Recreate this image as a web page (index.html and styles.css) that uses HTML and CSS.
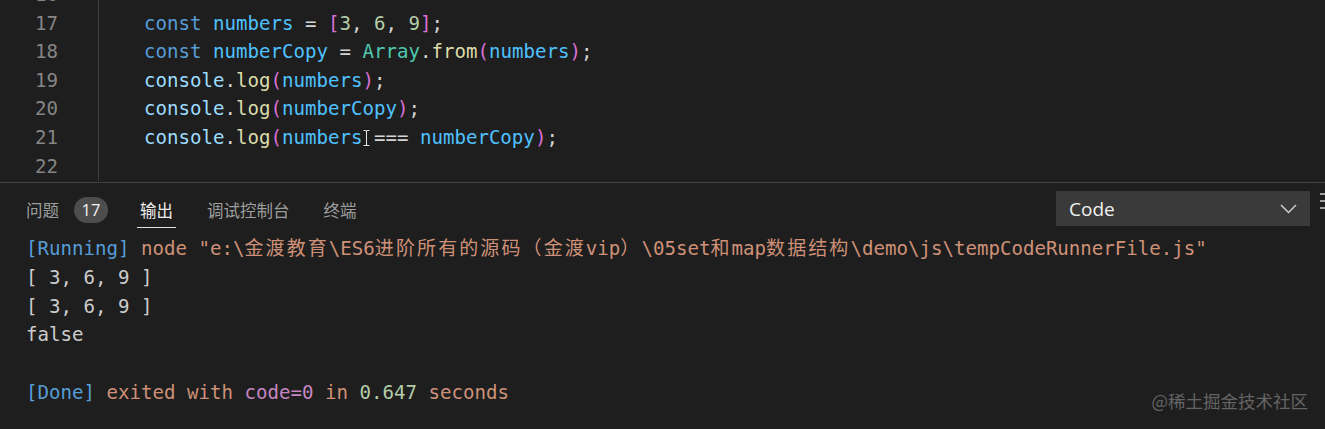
FILE: index.html
```html
<!DOCTYPE html>
<html lang="zh-CN">
<head>
  <meta charset="UTF-8" />
  <title>Output</title>
  <link rel="stylesheet" href="styles.css">
</head>
<body>

<section class="editor">
  <div class="lines">
    <div class="line"><span class="ln">16</span><span class="code"></span></div>
    <div class="line"><span class="ln">17</span><span class="code"><span class="kw">const</span> <span class="cv">numbers</span> = <span class="br">[</span><span class="num">3</span>, <span class="num">6</span>, <span class="num">9</span><span class="br">]</span>;</span></div>
    <div class="line"><span class="ln">18</span><span class="code"><span class="kw">const</span> <span class="cv">numberCopy</span> = <span class="ty">Array</span>.<span class="fn">from</span><span class="br">(</span><span class="cv">numbers</span><span class="br">)</span>;</span></div>
    <div class="line"><span class="ln">19</span><span class="code"><span class="var">console</span>.<span class="fn">log</span><span class="br">(</span><span class="cv">numbers</span><span class="br">)</span>;</span></div>
    <div class="line"><span class="ln">20</span><span class="code"><span class="var">console</span>.<span class="fn">log</span><span class="br">(</span><span class="cv">numberCopy</span><span class="br">)</span>;</span></div>
    <div class="line"><span class="ln">21</span><span class="code"><span class="var">console</span>.<span class="fn">log</span><span class="br">(</span><span class="cv">numbers</span><span class="ibeam"><svg width="9" height="18" viewBox="0 0 9 18"><path d="M1.5 1.5h2q1 0 1 1q0-1 1-1h2M4.5 2.5v13M1.5 16.5h2q1 0 1-1q0 1 1 1h2" fill="none" stroke="#111" stroke-width="2.6"/><path d="M1.5 1.5h2q1 0 1 1q0-1 1-1h2M4.5 2.5v13M1.5 16.5h2q1 0 1-1q0 1 1 1h2" fill="none" stroke="#e8e8e8" stroke-width="1.1"/></svg></span>=== <span class="cv">numberCopy</span><span class="br">)</span>;</span></div>
    <div class="line"><span class="ln">22</span><span class="code"></span></div>
  </div>
</section>

<section class="panel">
  <div class="panel-head">
    <div class="tabs">
      <span class="tab">问题</span>
      <span class="badge">17</span>
      <span class="tab active">输出</span>
      <span class="tab">调试控制台</span>
      <span class="tab">终端</span>
    </div>
    <div class="select">
      <span>Code</span>
      <svg width="17" height="10" viewBox="0 0 17 10"><polyline points="1,1 8.5,8.5 16,1" fill="none" stroke="#cccccc" stroke-width="1.5"/></svg>
    </div>
    <div class="more">
      <svg width="16" height="18" viewBox="0 0 16 18"><path d="M0 2h16M0 9h16M0 16h16" stroke="#cccccc" stroke-width="1.6"/></svg>
    </div>
  </div>
  <div class="output">
    <div><span class="tag">[Running]</span> <span class="str">node "e:\<span class="cjk">金渡教育</span>\ES6<span class="cjk">进阶所有的源码（金渡</span>vip<span class="cjk">）</span>\05set<span class="cjk">和</span>map<span class="cjk">数据结构</span>\demo\js\tempCodeRunnerFile.js"</span></div>
    <div>[ 3, 6, 9 ]</div>
    <div>[ 3, 6, 9 ]</div>
    <div>false</div>
    <div>&nbsp;</div>
    <div><span class="tag">[Done]</span> <span class="str">exited with</span> <span class="code-val">code=0</span> <span class="str">in</span> <span class="num">0.647</span> <span class="str">seconds</span></div>
  </div>
  <div class="watermark">@稀土掘金技术社区</div>
</section>

</body>
</html>
```

FILE: styles.css
```css
body {
  margin: 0;
  width: 1325px;
  height: 429px;
  overflow: hidden;
  background-color: #1e1e1e;
  color: #d4d4d4;
}

.editor {
  height: 182px;
  overflow: hidden;
  border-bottom: 1px solid #414141;
  font-family: "DejaVu Sans Mono", monospace;
  font-size: 19.1px;
}

.lines {
  margin-top: -19px;
}

.line {
  display: flex;
  height: 28.6px;
  line-height: 28.6px;
  white-space: pre;
}

.ln {
  width: 58px;
  text-align: right;
  color: #858585;
}

.code {
  margin-left: 40px;
  padding-left: 45px;
  border-left: 1px solid #404040;
  flex: 1;
}

.kw { color: #569cd6; }
.cv { color: #4fc1ff; }
.var { color: #9cdcfe; }
.br { color: #da70d6; }
.num { color: #b5cea8; }
.ty { color: #4ec9b0; }
.fn { color: #dcdcaa; }

.ibeam {
  display: inline-block;
  width: 1ch;
  vertical-align: top;
  position: relative;
}

.ibeam svg {
  position: absolute;
  left: 0;
  top: 5px;
}

.panel {
  position: relative;
  height: 246px;
}

.panel-head {
  display: flex;
  align-items: flex-start;
  height: 50px;
}

.tabs {
  display: flex;
  align-items: flex-start;
  padding: 15px 0 0 23px;
  font-family: "Noto Sans CJK SC", sans-serif;
  font-size: 16.5px;
  color: #9d9d9d;
}

.tab {
  line-height: 24px;
  padding: 0 3px 5px;
  margin-right: 28px;
  border-bottom: 1px solid transparent;
}

.tab:first-child {
  margin-right: 12px;
}

.tab.active {
  color: #ececec;
  border-bottom-color: #e0e0e0;
}

.badge {
  width: 34px;
  height: 26px;
  margin: -1px 29px 0 0;
  border-radius: 13px;
  background-color: #4d4d4d;
  color: #f2f2f2;
  font-family: "Open Sans", sans-serif;
  font-size: 16.5px;
  line-height: 26px;
  text-align: center;
}

.select {
  flex-shrink: 0;
  display: flex;
  align-items: center;
  justify-content: space-between;
  box-sizing: border-box;
  width: 254px;
  height: 35px;
  margin: 8px 0 0 auto;
  padding: 1px 13px 0 13px;
  background-color: #3a3a3a;
  color: #f0f0f0;
  font-family: "Open Sans", sans-serif;
  font-size: 19px;
}

.more {
  flex-shrink: 0;
  width: 5px;
  margin: 9px 0 0 10px;
  overflow: hidden;
}

.output {
  padding-left: 26px;
  font-family: "DejaVu Sans Mono", monospace;
  font-size: 19.1px;
  line-height: 28.8px;
  color: #cccccc;
}

.output div {
  white-space: pre;
}

.cjk {
  font-family: "Noto Sans CJK SC", sans-serif;
  font-size: 19px;
  letter-spacing: 2.1px;
}

.tag { color: #569cd6; }
.str { color: #ce9178; }
.code-val { color: #c586c0; }

.watermark {
  position: absolute;
  right: 17px;
  bottom: 16px;
  font-family: "Noto Sans CJK SC", sans-serif;
  font-size: 17.5px;
  color: #646464;
}
```
